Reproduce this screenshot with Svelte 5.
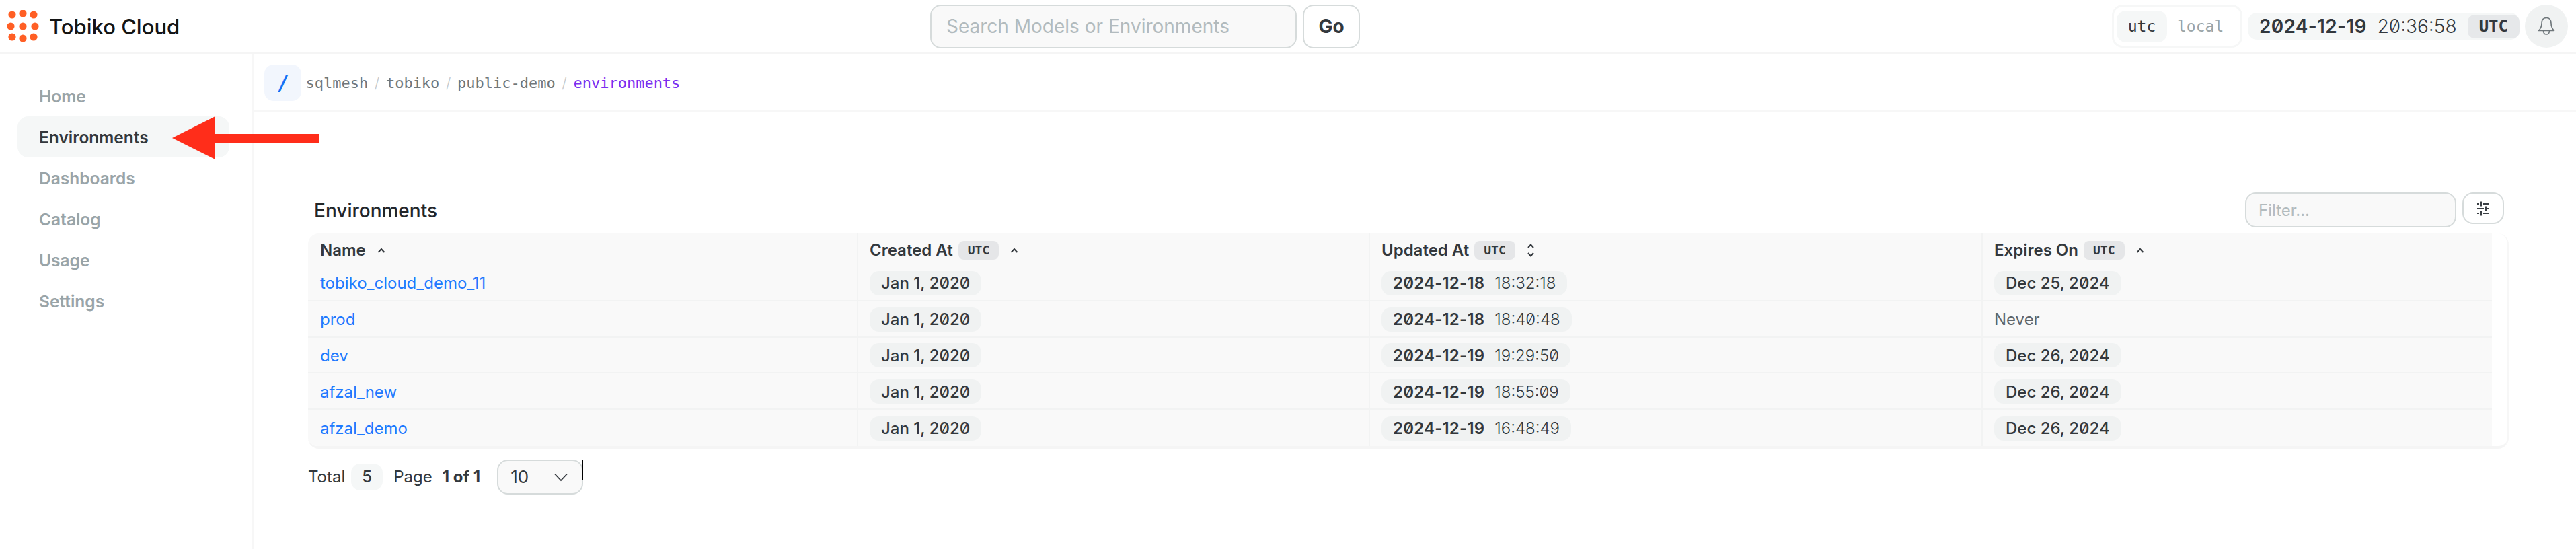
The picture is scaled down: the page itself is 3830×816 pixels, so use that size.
<script>
  const nav = ['Home', 'Environments', 'Dashboards', 'Catalog', 'Usage', 'Settings']
  const crumbs = ['sqlmesh', 'tobiko', 'public-demo']
  const rows = [
    { name: 'tobiko_cloud_demo_11', date: '2024-12-18', time: '18:32:18', expires: 'Dec 25, 2024' },
    { name: 'prod', date: '2024-12-18', time: '18:40:48', expires: null },
    { name: 'dev', date: '2024-12-19', time: '19:29:50', expires: 'Dec 26, 2024' },
    { name: 'afzal_new', date: '2024-12-19', time: '18:55:09', expires: 'Dec 26, 2024' },
    { name: 'afzal_demo', date: '2024-12-19', time: '16:48:49', expires: 'Dec 26, 2024' }
  ]
  const dots = [
    [18, 23], [34, 21], [50, 23],
    [16, 40], [34, 40], [52, 40],
    [18, 56], [34, 58], [50, 56]
  ]
</script>

<div class="page">
  <header class="topbar">
    <div class="brand">
      <svg class="logo" width="48" height="48" viewBox="10 16 48 48" aria-hidden="true">
        {#each dots as [cx, cy]}
          <circle {cx} {cy} r="5.6" fill="#ff5f25" />
        {/each}
      </svg>
      <span class="brand-name">Tobiko Cloud</span>
    </div>

    <div class="search">
      <input class="search-input" placeholder="Search Models or Environments" />
      <button class="go">Go</button>
    </div>

    <div class="tools">
      <div class="tz-toggle">
        <span class="tz active">utc</span>
        <span class="tz">local</span>
      </div>
      <div class="clock">
        <span class="clock-date">2024-12-19</span>
        <span class="clock-time">20:36:58</span>
        <span class="clock-utc">UTC</span>
      </div>
      <button class="bell" aria-label="Notifications">
        <svg width="26" height="28" viewBox="0 0 26 28" fill="none" stroke="#6f777b" stroke-width="1.600" stroke-linejoin="round">
          <path d="M13 1.500c-4.500 0-7 3-7 8 0 5-1.500 8-4.500 11h23c-3-3-4.500-6-4.500-11 0-5-2.500-8-7-8z" />
          <path d="M8.500 20.500c0 3.500 2 5.500 4.500 5.500s4.500-2 4.500-5.500" />
        </svg>
      </button>
    </div>
  </header>

  <div class="body">
    <nav class="sidebar">
      {#each nav as item}
        <a class="nav-item" class:active={item === 'Environments'} href="#top">{item}</a>
      {/each}
    </nav>

    <main class="main">
      <div class="crumbs">
        <span class="crumb-root">/</span>
        {#each crumbs as c}
          <span class="crumb">{c}</span>
          <span class="crumb-sep">/</span>
        {/each}
        <span class="crumb current">environments</span>
      </div>

      <section class="content">
        <div class="table-head">
          <h2>Environments</h2>
          <div class="table-tools">
            <input class="filter" placeholder="Filter..." />
            <button class="columns" aria-label="Columns">
              <svg width="20" height="22" viewBox="0 0 20 22" fill="none" stroke="#3a3f44" stroke-width="2">
                <path d="M1 4h3M9 4h10M1 11h10M16 11h3M1 18h3M9 18h10" />
                <path d="M6.500 0.500v7M13.500 7.500v7M6.500 14.500v7" stroke-width="3" />
              </svg>
            </button>
          </div>
        </div>

        <div class="table">
          <div class="row head">
            <div class="cell">
              Name
              <svg class="sort" width="14" height="10" viewBox="0 0 14 10" fill="none" stroke="#33383d" stroke-width="2"><path d="M2.500 8L7 3l4.500 5" /></svg>
            </div>
            <div class="cell">
              Created At <span class="badge">UTC</span>
              <svg class="sort" width="14" height="10" viewBox="0 0 14 10" fill="none" stroke="#33383d" stroke-width="2"><path d="M2.500 8L7 3l4.500 5" /></svg>
            </div>
            <div class="cell">
              Updated At <span class="badge">UTC</span>
              <svg class="sort" width="14" height="22" viewBox="0 0 14 22" fill="none" stroke="#33383d" stroke-width="2"><path d="M3 7l4-4.500L11 7M3 15l4 4.500L11 15" /></svg>
            </div>
            <div class="cell">
              Expires On <span class="badge">UTC</span>
              <svg class="sort" width="14" height="10" viewBox="0 0 14 10" fill="none" stroke="#33383d" stroke-width="2"><path d="M2.500 8L7 3l4.500 5" /></svg>
            </div>
          </div>

          {#each rows as r}
            <div class="row">
              <div class="cell"><a class="env-link" href="#top">{r.name}</a></div>
              <div class="cell"><span class="pill"><span class="day">Jan 1, 2020</span></span></div>
              <div class="cell">
                <span class="pill"><span class="date">{r.date}</span><span class="time">{r.time}</span></span>
              </div>
              <div class="cell">
                {#if r.expires}
                  <span class="pill"><span class="day">{r.expires}</span></span>
                {:else}
                  <span class="never">Never</span>
                {/if}
              </div>
            </div>
          {/each}
        </div>

        <div class="pager">
          <span>Total</span>
          <span class="count">5</span>
          <span class="page-label">Page</span>
          <strong>1 of 1</strong>
          <div class="size">
            <span>10</span>
            <svg width="22" height="14" viewBox="0 0 22 14" fill="none" stroke="#33383d" stroke-width="1.800"><path d="M2 2.500l9 9.500 9-9.500" /></svg>
            <i class="caret"></i>
          </div>
        </div>
      </section>
    </main>
  </div>

  <!-- annotation drawn over the screenshot -->
  <svg class="arrow" width="219" height="64" viewBox="0 0 219 64" aria-hidden="true">
    <path d="M0 32L64 0v26h155v13H64v25z" fill="#ff2d1a" />
  </svg>
</div>

<style>
  :global(body) {
    margin: 0;
    background: #fff;
  }

  .page {
    position: relative;
    width: 3830px;
    height: 816px;
    overflow: hidden;
    font-family: Inter, 'Noto Sans', sans-serif;
    color: #33383d;
    font-size: 24px;
  }

  .topbar {
    display: grid;
    grid-template-columns: 1373px auto 1fr;
    align-items: center;
    height: 78px;
    border-bottom: 2px solid #f5f5f5;
    padding: 0 12px 0 10px;
  }

  .brand {
    display: flex;
    align-items: center;
    gap: 15px;
  }

  .brand-name {
    font-size: 31px;
    font-weight: 500;
    color: #141414;
  }

  .search {
    display: flex;
    gap: 9px;
  }

  input {
    box-sizing: border-box;
    background: #f9f9f9;
    border: 2px solid #d6dbdb;
    border-radius: 16px;
    font: inherit;
    outline: none;
  }

  input::placeholder {
    color: #b2bbbe;
    opacity: 1;
  }

  .search-input {
    width: 545px;
    height: 65px;
    padding: 0 22px;
    font-size: 28px;
  }

  button {
    font-family: inherit;
    cursor: pointer;
  }

  .go {
    width: 85px;
    height: 65px;
    background: #fff;
    border: 2px solid #d6dbdb;
    border-radius: 16px;
    font-size: 28px;
    font-weight: 700;
    color: #33383d;
  }

  .tools {
    display: flex;
    justify-content: flex-end;
    align-items: center;
    gap: 8px;
  }

  .tz-toggle {
    display: flex;
    align-items: center;
    box-sizing: border-box;
    width: 194px;
    height: 64px;
    padding: 0 4px;
    border: 3px solid #f6f7f7;
    border-radius: 16px;
    font-family: 'DejaVu Sans Mono', monospace;
    font-size: 23px;
    color: #99a4a8;
  }

  .tz {
    display: flex;
    align-items: center;
    justify-content: center;
    height: 47px;
    padding: 0 15px;
    border-radius: 14px;
  }

  .tz.active {
    width: 75px;
    box-sizing: border-box;
    padding: 0;
    background: #f5f7f7;
    color: #33383d;
  }

  .clock {
    display: flex;
    align-items: center;
    width: 404px;
    box-sizing: border-box;
    height: 40px;
    padding-left: 17px;
    background: #f5f7f7;
    border-radius: 14px;
    font-size: 28px;
    font-feature-settings: 'zero';
  }

  .clock-date {
    font-weight: 600;
    letter-spacing: 0.3px;
  }

  .clock-time {
    margin-left: 16px;
    font-weight: 300;
  }

  .clock-utc {
    display: flex;
    align-items: center;
    height: 35px;
    margin-left: auto;
    padding: 0 17px;
    background: #e6e8ea;
    border-radius: 10px;
    font-family: 'DejaVu Sans Mono', monospace;
    font-size: 24px;
    font-weight: 700;
    font-feature-settings: normal;
  }

  .bell {
    display: flex;
    align-items: center;
    justify-content: center;
    width: 64px;
    height: 64px;
    padding: 0;
    border: 0;
    border-radius: 50%;
    background: #f0f2f2;
  }

  .body {
    display: flex;
    height: 736px;
  }

  .sidebar {
    display: flex;
    flex-direction: column;
    box-sizing: border-box;
    width: 377px;
    padding: 32px 34px 0 26px;
    border-right: 2px solid #f7f7f7;
    flex-shrink: 0;
  }

  .nav-item {
    display: flex;
    align-items: center;
    height: 61px;
    padding-left: 32px;
    border-radius: 16px;
    font-size: 24.5px;
    font-weight: 600;
    color: #99a4a8;
    text-decoration: none;
  }

  .nav-item.active {
    background: #f5f7f7;
    color: #33383d;
  }

  .main {
    flex: 1;
    min-width: 0;
  }

  .crumbs {
    display: flex;
    align-items: center;
    gap: 9.500px;
    box-sizing: border-box;
    height: 86px;
    padding: 2px 0 0 16px;
    border-bottom: 2px solid #f7f7f7;
    font-family: 'DejaVu Sans Mono', monospace;
    font-size: 22px;
    color: #70777b;
  }

  .crumb-root {
    display: flex;
    align-items: center;
    justify-content: center;
    width: 55px;
    height: 54px;
    margin-right: -3px;
    background: #f2f6fd;
    border-radius: 14px;
    color: #1672f5;
    font-size: 30px;
    font-weight: 700;
  }

  .crumb-sep {
    color: #c3c9cb;
    font-family: Inter, sans-serif;
    font-weight: 300;
  }

  .crumb.current {
    color: #7a2ff0;
  }

  .content {
    padding: 0 100px 0 81px;
  }

  .table-head {
    display: flex;
    justify-content: space-between;
    height: 61px;
    padding: 120px 7px 0 9px;
  }

  h2 {
    margin: 0;
    padding-top: 10px;
    font-size: 28px;
    font-weight: 500;
    color: #232629;
  }

  .table-tools {
    display: flex;
    align-items: flex-start;
    gap: 9px;
  }

  .filter {
    width: 314px;
    height: 52px;
    padding: 0 18px;
  }

  .columns {
    display: flex;
    align-items: center;
    justify-content: center;
    width: 62px;
    height: 47px;
    padding: 0;
    background: #fff;
    border: 2px solid #d6dbdb;
    border-radius: 16px;
  }

  .table {
    padding-right: 23px;
    border-radius: 16px;
    border-right: 2px solid #f7f7f7;
    border-bottom: 4px solid #f5f5f5;
    overflow: hidden;
  }

  .row {
    display: grid;
    grid-template-columns: 816px 761px 911px 761px;
    box-sizing: border-box;
    height: 53.750px;
    background: #f9f9f9;
    border-bottom: 2px solid #f2f3f3;
  }

  .row:last-child {
    border-bottom: 0;
  }

  .row.head {
    height: 47px;
    border-bottom: 0;
    font-weight: 600;
  }

  .cell {
    display: flex;
    align-items: center;
    gap: 8px;
    box-sizing: border-box;
    padding: 2px 0 0 17px;
    border-left: 2px solid #f2f3f3;
  }

  .cell:first-child {
    padding-left: 18px;
    border-left: 0;
  }

  .sort {
    margin-left: 8px;
  }

  .badge {
    display: flex;
    align-items: center;
    height: 28px;
    padding: 0 14px;
    background: #e5e6e8;
    border-radius: 8px;
    font-family: 'DejaVu Sans Mono', monospace;
    font-size: 18px;
    font-weight: 700;
  }

  .env-link {
    color: #1f7aff;
    text-decoration: none;
  }

  .pill {
    display: inline-flex;
    align-items: center;
    height: 36px;
    padding: 0 17px;
    background: #f0f2f2;
    border-radius: 14px;
    font-feature-settings: 'zero';
  }

  .day {
    font-weight: 500;
  }

  .date {
    font-weight: 600;
    letter-spacing: 0.2px;
  }

  .time {
    margin-left: 15px;
    font-weight: 300;
  }

  .never {
    color: #5f666a;
  }

  .pager {
    display: flex;
    align-items: center;
    margin-top: 16px;
    height: 52px;
    padding-left: 0;
  }

  .count {
    display: flex;
    align-items: center;
    justify-content: center;
    width: 47px;
    height: 40px;
    margin-left: 9px;
    background: #f5f7f7;
    border-radius: 14px;
    font-weight: 500;
  }

  .page-label {
    margin-left: 16px;
  }

  strong {
    margin-left: 15px;
    font-weight: 700;
  }

  .size {
    position: relative;
    display: flex;
    align-items: center;
    justify-content: space-between;
    box-sizing: border-box;
    width: 128px;
    height: 52px;
    margin-left: 25px;
    padding: 0 20px 0 18px;
    background: #f9f9f9;
    border: 2px solid #d6dbdb;
    border-radius: 16px;
    font-size: 26px;
  }

  .caret {
    position: absolute;
    top: -2px;
    right: -2px;
    width: 2px;
    height: 30px;
    background: #000;
  }

  .arrow {
    position: absolute;
    left: 256px;
    top: 173px;
  }
</style>
